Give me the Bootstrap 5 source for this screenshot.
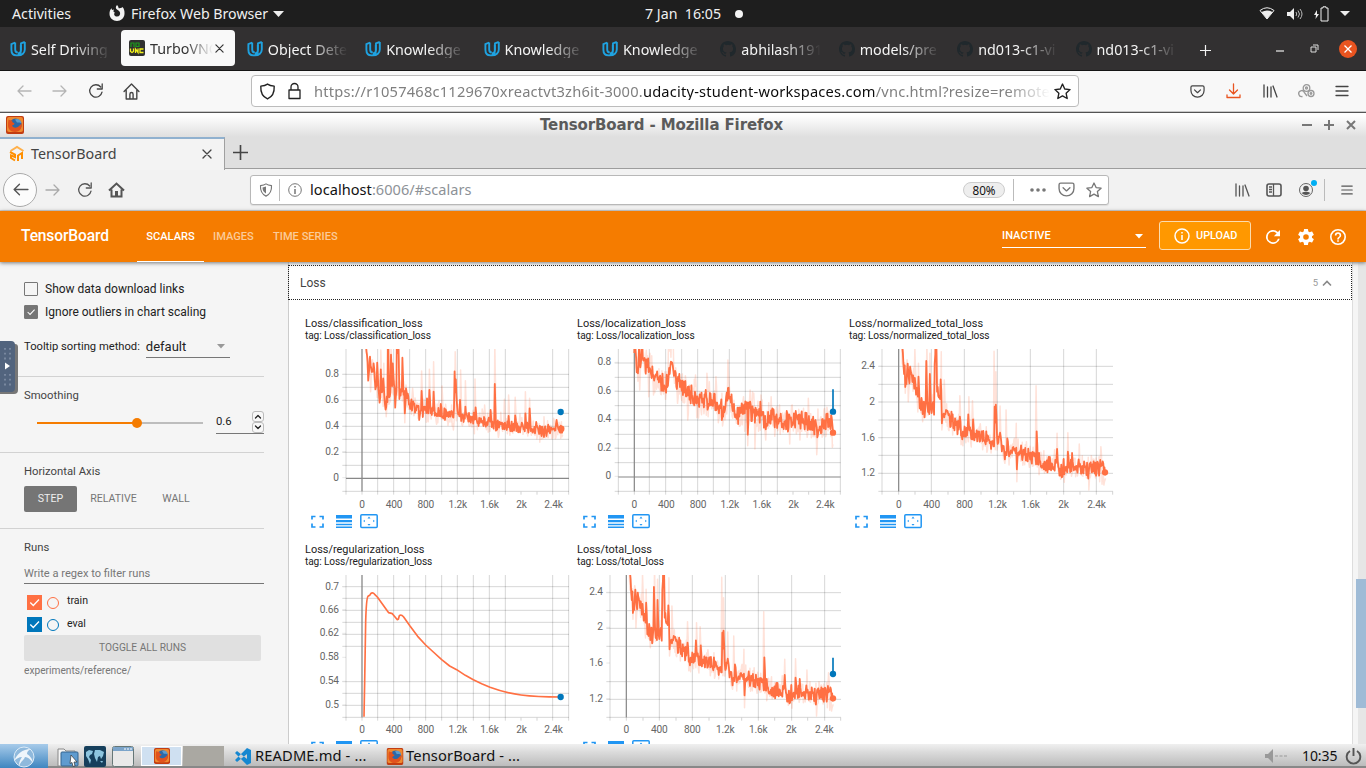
<!DOCTYPE html>
<html lang="en">
<head>
<meta charset="utf-8">
<title>TensorBoard</title>
<link href="https://cdn.jsdelivr.net/npm/bootstrap@5.3.0/dist/css/bootstrap.min.css" rel="stylesheet">
<style>
body{width:1366px;height:768px;overflow:hidden;font-family:"Noto Sans","Open Sans",sans-serif;font-size:14.3px;line-height:1.2;color:#222;background:#fff}
svg{display:block;overflow:visible}
.ln{fill:none;stroke:currentColor;stroke-width:1.3;stroke-linecap:round;stroke-linejoin:round}
.slots{display:grid;align-items:center;white-space:nowrap}
/* desktop top bar */
.gnome{height:27px;background:#1e1e1e;color:#f0f0f0;font-size:14.2px;grid-template-columns:12px 97px 22px 142px 372px 90px 524px 28px 27px 26px 1fr}
.gnome>*{min-width:0}
/* outer browser */
.otabs{height:44px;background:#323031;border-bottom:1px solid #151515;color:#f4f4f4;font-size:14.3px}
.otab{width:118.4px;height:44px;padding-left:10px;gap:5px;flex:none}
.otab .ttl{padding-top:2px;white-space:nowrap;-webkit-mask-image:linear-gradient(90deg,#000 42px,transparent 80px)}
.otab.on{width:114px;height:36px;margin:0 0 1px 2.6px;padding-left:8px;background:#f9f9f9;color:#333;border-radius:4px;margin-right:1.8px}
.otab.on .ttl{width:67px;-webkit-mask-image:linear-gradient(90deg,#000 36px,transparent 63px)}
.otab.on svg.x{margin-left:-7px}
.wctl{width:90px;grid-template-columns:34px 29px 1fr}
.onav{height:41px;background:#f8f8f8;color:#444;grid-template-columns:16px 36px 36px 35px 128px 939px 36px 36px 36px 36px 1fr;border-bottom:1px solid #c9c9c9}
.ourl{width:828px;height:32px;background:#fff;border:1px solid #bcbcbc;border-radius:4px;grid-template-columns:7px 29px 26px 736px 1fr;font-size:14.65px;color:#7f7f7f}
.ourl .adr{letter-spacing:.21px;padding-top:1px;-webkit-mask-image:linear-gradient(90deg,#000 94%,transparent 100%)}
.ourl b{font-weight:400;color:#0c0c0c}
/* remote window */
.vtitle{height:25px;border-top:1px solid #555;background:linear-gradient(#fff 10%,#dfdfdf);grid-template-columns:6px 534px 762px 22px 22px 1fr}
.vtitle .cap{font:bold 15px "DejaVu Sans",sans-serif;color:#5b5b5b;letter-spacing:-.12px}
.vtabs{height:32px;background:#dfdfdf;border-bottom:1px solid #9d9d9d;color:#444}
.vtab{width:225px;height:33px;margin-bottom:-1px;background:#f3f3f3;border-top:2.5px solid #90b1cf;border-right:1px solid #a0a0a0;grid-template-columns:9px 22px 171px 1fr}
.vnav{height:42px;background:#f2f2f2;color:#555;grid-template-columns:3px 42px 32px 31px 142px 984px 32px 32px 42px 1fr;border-bottom:1px solid #cfcfcf}
.vnav .ln{stroke-width:1.6}
.back{width:34px;height:34px;border:1px solid #aaa;border-radius:50%;background:#fcfcfc}
.vurl{width:859px;height:30px;background:#fff;border:1px solid #b8b8b8;border-radius:3px;color:#8d9297;grid-template-columns:8px 20px 31px 653px 67px 28px 28px 1fr;box-shadow:0 1px 1px #ddd}
.vurl b{font-weight:400;color:#111}
.vadr{font-size:14.55px;letter-spacing:.05px;padding-top:1px}
.vsep{border-left:1px solid #bbb;height:22px}
.pct{width:42px;height:16px;border:1px solid #ccc;border-radius:8px;background:#eee;font-size:11.7px;line-height:14px;text-align:center;color:#111}
/* tensorboard */
.tb{font-family:Roboto,sans-serif}
.tbhead{height:51px;background:#f57c00;color:#fff;grid-template-columns:21px 116px 67px 9px 60px 68px 661px 157px 107px 32px 32px 1fr;position:relative;z-index:2;box-shadow:0 1px 4px #777;font-size:11.1px;font-weight:500}
.tbhead .brandname{font-size:15.6px;font-weight:500;letter-spacing:-.15px}
.tbhead .tabon{height:51px;line-height:51px;border-bottom:1.5px solid #fff;text-align:center}
.dim{color:#fbcb99}
.inact{width:144px;height:23px;border-bottom:1px solid #fff;font-weight:500}
.upl{width:92px;height:29px;margin-top:-2px;border:1px solid #fbdcae;border-radius:3px;background:#ff9800;gap:6px;padding-left:14px;font-size:10.9px}
.tbmain{height:482px;overflow:hidden}
.side{width:288px;background:#f5f5f5;font-size:11.3px;color:#444}
.sec{width:264px;padding-left:24px;border-bottom:1px solid #d2d2d2}
.sec:last-child{border:0}
.s1{height:115px;padding-top:16px;color:#222}.s2,.s3{height:76px}
.s2,.s3,.s4{padding-top:12px}
.ck{height:23px;gap:7px;font-size:12px}
.box{width:14px;height:14px;border:1px solid #777;border-radius:1px;flex:none;margin-top:-2px}
.dd{width:84px;height:22px;border-bottom:1px solid #777;font-size:13px;margin-left:6px}
.ttrow{padding-top:12px;font-size:11.2px}
.smrow{padding-top:9px}
.track{width:166px;height:2px;margin-left:13px;background:linear-gradient(90deg,#f57c00 60%,#bdbdbd 60%)}
.knob{width:10px;height:10px;border-radius:50%;background:#f57c00;margin-left:95px}
.num{width:48px;height:22px;border-bottom:1px solid #777;margin-left:13px;color:#222}
.spin{width:12px;height:11px;border:1px solid #bbb;border-radius:3px;background:#f8f8f8}
.hbs{padding-top:7px}
.hb{height:26px;line-height:26px;font-size:10.6px;color:#757575;text-align:center}
.hb.on{width:53px;background:#757575;color:#eee;border-radius:2px}
.flt{height:25px;border-bottom:1px solid #757575;color:#777;font-size:11.1px}
.runs{padding-top:7px}
.rn{height:22.3px;color:#222;font-size:10.6px}
.rn .sq{width:15px;height:15px;margin:1px 5px 0 3px}
.rn .ci{width:12px;height:12px;border:1.3px solid;border-radius:50%;margin:2px 8px 0 0}
.tog{width:237px;height:26px;line-height:25px;background:#e0e0e0;border-radius:2px;text-align:center;color:#757575;font-size:10.2px}
.xp{color:#777;font-size:10.2px}
.pane{width:1065px;background:#fff;border-right:1px solid #ddd;border-left:1px solid #ccc;padding-top:3px}
.losshd{height:35px;margin-left:-1px;border:1px dotted #222;font-size:12px;color:#444;padding:1px 19px 0 11px}
.cnt{font-size:9.5px;color:#999}
.charts{padding:18px 0 0 16px}
.ch{width:272px;height:226px;font-size:10.15px;letter-spacing:-.1px;line-height:12px;color:#222}
.ch .t1{font-size:10.95px;letter-spacing:0}
.ch .tools{padding:0 0 0 6px;gap:12px;color:#2196f3}
.plot{margin-top:3px}
.plot text{font:30.5px Roboto,sans-serif;letter-spacing:-.6px;fill:#666}
.sbar{width:13px;background:linear-gradient(90deg,#f5f5f5 5px,#e6e6e6 5px);padding:317px 0 0 3px}
.thumb{height:129px;background:#9fbbd6}
/* task bar */
.task{height:24px;background:linear-gradient(#f0f0f0,#dadada 35%,#bcbcbc 92%,#888 93%);color:#111;grid-template-columns:48px 9px 27px 28px 29px 42px 42px 9px 21px 131px 20px 859px 37px 43px 1fr;font-size:14.7px}
.task .lbl{letter-spacing:.12px}
.clk{font-size:14px;letter-spacing:-.1px}
.lx{height:24px;background:linear-gradient(#a7cbea,#3f86c0);width:48px}
.pg{width:41px;height:20px}
</style>
</head>
<body>
<svg width="0" height="0" class="position-absolute">
<defs>
<symbol id="uda" viewBox="0 0 16 16"><path d="M5.2 1.5 1.4 3.2v5.6c0 3.6 2.2 5.6 5 5.6 2.5 0 4.4-1.5 4.4-4.5V3.8M5.2 1.5v7c0 2 1.2 3 2.6 3M14.8.9 11 2.4v6.4c0 2-1.2 3.6-3 3.6M14.8.9v7.6c0 3.4-2.8 5.9-6.8 5.9" fill="none" stroke="#1fa2e0" stroke-width="1.9"/></symbol>
<symbol id="gh" viewBox="0 0 16 16"><path fill="#20282c" d="M8 0C3.58 0 0 3.58 0 8c0 3.54 2.29 6.53 5.47 7.59.4.07.55-.17.55-.38 0-.19-.01-.82-.01-1.49-2.01.37-2.53-.49-2.69-.94-.09-.23-.48-.94-.82-1.13-.28-.15-.68-.52-.01-.53.63-.01 1.08.58 1.23.82.72 1.21 1.87.87 2.33.66.07-.52.28-.87.51-1.07-1.78-.2-3.64-.89-3.64-3.95 0-.87.31-1.59.82-2.15-.08-.2-.36-1.02.08-2.12 0 0 .67-.21 2.2.82a7.6 7.6 0 0 1 4 0c1.53-1.04 2.2-.82 2.2-.82.44 1.1.16 1.92.08 2.12.51.56.82 1.27.82 2.15 0 3.07-1.87 3.75-3.65 3.95.29.25.54.73.54 1.48 0 1.07-.01 1.93-.01 2.2 0 .21.15.46.55.38A8 8 0 0 0 16 8c0-4.42-3.58-8-8-8z"/></symbol>
<symbol id="left" viewBox="0 0 16 16"><path class="ln" d="M15 8H2M7 3 2 8l5 5"/></symbol>
<symbol id="right" viewBox="0 0 16 16"><path class="ln" d="M1 8h13M9 3l5 5-5 5"/></symbol>
<symbol id="rel" viewBox="0 0 16 16"><path class="ln" d="M14 9.2A6.2 6.2 0 1 1 12.7 4M14.2 1v5H9.3"/></symbol>
<symbol id="home" viewBox="0 0 16 16"><path class="ln" d="M1 8l7-7 7 7M3 7v8h10V7M6.5 15v-4.5a1.5 1.5 0 0 1 3 0V15"/></symbol>
<symbol id="shield" viewBox="0 0 16 16"><path class="ln" d="M8 1c2 1.3 4 1.7 6.3 2 .3 5-1 9.5-6.3 12C2.7 12.5 1.4 8 1.7 3 4 2.7 6 2.3 8 1z"/></symbol>
<symbol id="pocket" viewBox="0 0 16 16"><path class="ln" d="M2.5 2h11a1.500 1.500 0 0 1 1.500 1.500V7c0 4-3 7-7 7S1 11 1 7V3.500A1.500 1.500 0 0 1 2.500 2zM4.800 6.300 8 9.300l3.200-3"/></symbol>
<symbol id="star" viewBox="0 0 16 16"><path class="ln" d="m8 1 2.100 4.600 5 .6-3.700 3.400 1 5L8 12.100l-4.400 2.500 1-5L.9 6.200l5-.6z"/></symbol>
<symbol id="lib" viewBox="0 0 16 16"><path class="ln" d="M2 2v12M5.500 4v10M9 4v10M11 3l4 11"/></symbol>
<symbol id="burger" viewBox="0 0 16 16"><path class="ln" d="M2 3.500h12M2 8h12M2 12.500h12"/></symbol>
<symbol id="cross" viewBox="0 0 10 10"><path class="ln" d="M1 1l8 8M9 1 1 9"/></symbol>
<symbol id="plus" viewBox="0 0 12 12"><path class="ln" d="M6 0v12M0 6h12"/></symbol>
<symbol id="fox" viewBox="0 0 18 18"><rect width="18" height="18" rx="2" fill="#c23d12"/><rect x="1" y="1" width="16" height="15" rx="2" fill="#ef8a30"/><circle cx="9.500" cy="8.800" r="6.200" fill="#2c69a8"/><path d="M9 3.500c3-1.500 6 0 6.500 4-1.500-1.500-3-1-4.500-1z" fill="#5e9ccb"/><path d="M2.500 3.500C4 4.500 5 4.200 6.500 4.600 5.500 6 7 6.700 8.600 7.400 8 9 6.500 8.800 6 9.800c1.500 2.500 5 2.200 6.500.7 1-1 2-1.500 3.200-3.500.8 5-2.200 9-6.700 9C4.500 16 2 13 2 9.500c0-2 0-4 .5-6z" fill="#e2521d"/></symbol>
<symbol id="tick" viewBox="0 0 15 15"><path d="m3.300 7.500 3 3L12 4.500" fill="none" stroke="#fff" stroke-width="1.300"/></symbol>
</defs></svg>

<div class="gnome slots">
<i></i><span>Activities</span>
<svg width="16" height="17" viewBox="0 0 16 17" fill="#f2f2f2"><path d="M8 0c1 1 1.500 1.700 1.600 3.200C12 3.500 13 2.500 13.500 2c1.500 1.500 2.200 4 2 7-.3 4-3.500 7-7.500 7S.6 13 .5 9C.5 6.500 1 5 2.500 3.300L3 5l2-.6c-1 2-.6 2.600 1 3C4.500 8.500 5 11.500 8 11.500c2.500 0 3.500-2 3-4C10.500 5.500 8 5 7 3.500 6.500 2 7.300.7 8 0z"/></svg>
<span>Firefox Web Browser</span>
<svg width="11" height="6"><path d="M0 0h11L5.500 6z" fill="#eee"/></svg>
<span>7 Jan&nbsp; 16:05</span>
<svg width="8" height="8"><circle cx="4" cy="4" r="4" fill="#f4f4f4"/></svg>
<svg width="16" height="13" viewBox="0 0 16 13"><path d="M1 3.500Q8-2 15 3.500L8 12z" fill="none" stroke="#eee"/><path d="M2.500 5Q8 2 13.500 5L8 12z" fill="#eee"/></svg>
<svg width="16" height="14" viewBox="0 0 16 14"><path d="M0 5h3l4-4v12L3 9H0z" fill="#eee"/><path d="M9 5q1.500 2 0 4M11 3.500q3 3.500 0 7M13 2q4 5 0 10" fill="none" stroke="#bbb"/></svg>
<svg width="16" height="16" viewBox="0 0 16 16"><path d="M3 4 0 9h2l-.5 4L5 8H3z" fill="#eee"/><path d="M7 2h2V.8h3V2h2v13H7z" fill="none" stroke="#eee"/></svg>
<svg width="10" height="5"><path d="M0 0h10L5 5z" fill="#eee"/></svg>
</div>

<div class="otabs d-flex align-items-center">
<div class="otab d-flex align-items-center"><svg width="16" height="16"><use href="#uda"/></svg><span class="ttl">Self Driving</span></div>
<div class="otab on d-flex align-items-center"><svg width="16" height="16" viewBox="0 0 16 16"><rect width="16" height="16" rx="2" fill="#303030"/><path d="M2 7V3h3v4M7 3h3v3.500H7z" fill="none" stroke="#1c9c1c" stroke-width="1.200"/><path d="M1.500 8.500v3l1.500 1 1.500-1v-3M6.500 13V9l2.500 3.500V8.500M14.500 9H11v3.500h3.500" fill="none" stroke="#f2f21a" stroke-width="1.300"/></svg><span class="ttl">TurboVNC</span><svg class="x" width="9" height="9"><use href="#cross"/></svg></div>
<div class="otab d-flex align-items-center"><svg width="16" height="16"><use href="#uda"/></svg><span class="ttl">Object Dete</span></div>
<div class="otab d-flex align-items-center"><svg width="16" height="16"><use href="#uda"/></svg><span class="ttl">Knowledge</span></div>
<div class="otab d-flex align-items-center"><svg width="16" height="16"><use href="#uda"/></svg><span class="ttl">Knowledge</span></div>
<div class="otab d-flex align-items-center"><svg width="16" height="16"><use href="#uda"/></svg><span class="ttl">Knowledge</span></div>
<div class="otab d-flex align-items-center"><svg width="16" height="16"><use href="#gh"/></svg><span class="ttl">abhilash191</span></div>
<div class="otab d-flex align-items-center"><svg width="16" height="16"><use href="#gh"/></svg><span class="ttl">models/pre</span></div>
<div class="otab d-flex align-items-center"><svg width="16" height="16"><use href="#gh"/></svg><span class="ttl">nd013-c1-vi</span></div>
<div class="otab d-flex align-items-center"><svg width="16" height="16"><use href="#gh"/></svg><span class="ttl">nd013-c1-vi</span></div>
<svg class="ms-3 mt-1" width="11" height="11"><use href="#plus"/></svg>
<div class="slots wctl ms-auto">
<svg width="8" height="9"><path d="M0 7h8" stroke="#eee" stroke-width="1.200"/></svg>
<svg width="9" height="9"><path d="M1 3h5v5H1zM3 1h5v5" fill="none" stroke="#ddd"/></svg>
<svg width="18" height="18"><circle cx="9" cy="9" r="9" fill="#e95420"/><path d="m5.500 5.500 7 7m0-7-7 7" stroke="#fff" stroke-width="1.300"/></svg></div>
</div>

<div class="onav slots">
<i></i><svg width="16" height="16" color="#b5b5b5"><use href="#left"/></svg><svg width="16" height="16" color="#b5b5b5"><use href="#right"/></svg><svg width="16" height="16"><use href="#rel"/></svg><svg width="17" height="17"><use href="#home"/></svg>
<div class="ourl slots"><i></i><svg width="17" height="17" color="#222"><use href="#shield"/></svg>
<svg width="13" height="17" viewBox="0 0 13 17" color="#222"><path class="ln" d="M1 7h11v8.500H1zM3 7V4a3.500 3.500 0 0 1 7 0v3"/></svg>
<span class="adr">https://r1057468c1129670xreactvt3zh6it-3000.<b>udacity-student-workspaces.com</b>/vnc.html?resize=remote</span>
<svg class="ms-1" width="17" height="17" color="#222"><use href="#star"/></svg></div>
<svg width="15" height="15"><use href="#pocket"/></svg>
<svg width="15" height="16" viewBox="0 0 15 16" color="#e95420"><path class="ln" d="M7.500 1v10M3.500 7l4 4 4-4M1 12v2.500h13V12"/></svg>
<svg width="16" height="16"><use href="#lib"/></svg>
<svg width="17" height="14" viewBox="0 0 17 14" fill="none" stroke="#999" stroke-width="1.300"><circle cx="8.500" cy="4" r="3.300"/><circle cx="8.500" cy="4" r="1"/><circle cx="13" cy="9.500" r="3"/><circle cx="13" cy="9.500" r=".8"/><path d="M4.500 12.500a3 3 0 1 1 2-4M6 8l3 4"/></svg>
<svg width="16" height="16"><use href="#burger"/></svg>
</div>

<div class="vtitle slots"><i></i><svg width="18" height="18"><use href="#fox"/></svg><span class="cap">TensorBoard - Mozilla Firefox</span>
<svg width="10" height="10" color="#777"><path d="M0 5h10" stroke="currentColor" stroke-width="2"/></svg><svg width="10" height="10" color="#777"><path d="M0 5h10M5 0v10" stroke="currentColor" stroke-width="2"/></svg><svg width="10" height="10" color="#777"><path d="m1 1 8 8m0-8L1 9" stroke="currentColor" stroke-width="2"/></svg></div>

<div class="vtabs d-flex align-items-center">
<div class="vtab slots"><i></i><svg width="16" height="16" viewBox="0 0 16 16" fill="none" stroke="#ff8f00" stroke-width="2"><path d="M1.500 5 8 1l6.500 4" stroke="#ffb04a"/><path d="M1 6l5 2.500V11L2 9.500V12l4 2.500M9 9v6M9 9.500l4-2.500v6"/></svg><span>TensorBoard</span><svg width="10" height="10"><use href="#cross"/></svg></div>
<svg class="ms-2" width="15" height="15"><use href="#plus"/></svg></div>

<div class="vnav slots"><i></i>
<div class="back d-flex align-items-center justify-content-center"><svg width="17" height="17"><use href="#left"/></svg></div>
<svg width="16" height="16" color="#aaa"><use href="#right"/></svg><svg width="16" height="16"><use href="#rel"/></svg>
<svg width="17" height="16" viewBox="0 0 17 16"><path d="m1 8.500 7.500-7 7.500 7M3.500 7.500v7h10v-7" fill="none" stroke="#555" stroke-width="2"/><path d="M7 14V9h3v5z" fill="#555"/></svg>
<div class="vurl slots"><i></i><svg width="14" height="14" color="#777" viewBox="0 0 16 16"><use href="#shield"/><path d="M8 4v8c-3-2-4-4-4-7z" fill="#777"/></svg>
<div class="vsep ps-2 d-flex align-items-center"><svg width="14" height="14" viewBox="0 0 14 14" fill="none" stroke="#777"><circle cx="7" cy="7" r="6.300"/><path d="M7 3v1.500M7 6v5" stroke-width="1.500"/></svg></div>
<span class="vadr"><b>localhost</b>:6006/#scalars</span><div class="d-flex align-items-center"><span class="pct">80%</span><span class="vsep ms-2 ps-1"></span></div>
<svg width="16" height="4" fill="#777"><circle cx="2" cy="2" r="1.800"/><circle cx="8" cy="2" r="1.800"/><circle cx="14" cy="2" r="1.800"/></svg>
<svg width="17" height="17" color="#777"><use href="#pocket"/></svg><svg width="16" height="16" color="#777"><use href="#star"/></svg></div>
<svg width="16" height="16"><use href="#lib"/></svg>
<svg width="16" height="16" viewBox="0 0 16 16" color="#555"><rect class="ln" x="1" y="2" width="14" height="12" rx="2"/><path d="M7.500 2v12M3 5h3M3 7.500h3M3 10h3" stroke="#555" stroke-width="1.300"/></svg>
<div class="d-flex align-items-center"><svg width="18" height="16" viewBox="0 0 18 16"><circle cx="8" cy="8" r="6.500" fill="none" stroke="#666"/><circle cx="8" cy="6.500" r="2.800" fill="#555"/><path d="M3.500 11q4.500-2.500 9 0-4.500 4-9 0z" fill="#555"/><circle cx="16" cy="1" r="3" fill="#00aef3"/></svg><span class="vsep ms-2"></span></div>
<svg width="14" height="16"><use href="#burger"/></svg>
</div>

<div class="tb">
<div class="tbhead slots"><i></i><span class="brandname">TensorBoard</span><span class="tabon">SCALARS</span><i></i><span class="dim">IMAGES</span><span class="dim">TIME SERIES</span><i></i>
<div class="inact d-flex justify-content-between align-items-center">INACTIVE<svg width="8" height="5" style="margin-right:3px"><path d="M0 0h8L4 4.500z" fill="#fff"/></svg></div>
<div class="upl d-flex align-items-center"><svg width="16" height="16" viewBox="0 0 16 16"><circle cx="8" cy="8" r="7" fill="none" stroke="#fff" stroke-width="1.500"/><path d="M8 4v1.500M8 7v5" stroke="#fff" stroke-width="1.500"/></svg>UPLOAD</div>
<svg width="14" height="14" viewBox="4 4 16 16" fill="#fff"><path d="M17.650 6.350A8 8 0 1 0 19.730 14h-2.080A6 6 0 1 1 12 6c1.660 0 3.140.69 4.220 1.780L13 11h7V4z"/></svg>
<svg width="16" height="16" viewBox="2 2 20 20" fill="#fff"><path d="M19.430 12.980c.04-.32.07-.64.07-.98s-.03-.66-.07-.98l2.110-1.650c.19-.15.24-.42.12-.64l-2-3.460c-.12-.22-.39-.3-.61-.22l-2.490 1c-.52-.4-1.080-.73-1.690-.98l-.38-2.650A.49.49 0 0 0 14 2h-4c-.25 0-.46.18-.49.42l-.38 2.650c-.61.25-1.170.59-1.690.98l-2.490-1c-.23-.09-.49 0-.61.22l-2 3.460c-.13.22-.07.49.12.64l2.110 1.650c-.04.32-.07.65-.07.98s.03.66.07.98l-2.110 1.650c-.19.15-.24.42-.12.64l2 3.460c.12.22.39.3.61.22l2.490-1c.52.4 1.080.73 1.690.98l.38 2.650c.03.24.24.42.49.42h4c.25 0 .46-.18.49-.42l.38-2.650c.61-.25 1.170-.59 1.690-.98l2.490 1c.23.09.49 0 .61-.22l2-3.460c.12-.22.07-.49-.12-.64zM12 15.500a3.500 3.500 0 1 1 0-7 3.500 3.500 0 0 1 0 7z"/></svg>
<svg width="16" height="16" viewBox="2 2 20 20" fill="#fff"><path d="M11 18h2v-2h-2zM12 2a10 10 0 1 0 0 20 10 10 0 0 0 0-20zm0 18a8 8 0 1 1 0-16 8 8 0 0 1 0 16zm0-14a4 4 0 0 0-4 4h2a2 2 0 1 1 4 0c0 2-3 1.750-3 5h2c0-2.250 3-2.500 3-5a4 4 0 0 0-4-4z"/></svg>
</div>
<div class="tbmain d-flex">
<div class="side flex-shrink-0 position-relative">
<svg class="position-absolute start-0" style="top:79px" width="19" height="55" viewBox="0 0 19 55"><path d="M0 3h15q3 0 3 3v43q0 4-4 4H0z" fill="#777"/><path d="M0 0h11q4 0 4 4v43q0 4-4 4H0z" fill="#52647e"/><path d="M5 7v12M10 7v12M5 33v12M10 33v12" stroke="#7d8ca3" stroke-width="1.800" stroke-dasharray="1.800 3"/><path d="M5 21.500 10 25l-5 3.500z" fill="#fff"/></svg>
<div class="sec s1">
<div class="ck d-flex align-items-center"><span class="box"></span>Show data download links</div>
<div class="ck d-flex align-items-center"><span class="box" style="background:#757575"><svg width="12" height="12"><use href="#tick"/></svg></span>Ignore outliers in chart scaling</div>
<div class="ttrow d-flex align-items-center"><span>Tooltip sorting method:</span><div class="dd d-flex align-items-center justify-content-between">default<svg class="me-1" width="9" height="5"><path d="M0 0h8L4 4.500z" fill="#999"/></svg></div></div>
</div>
<div class="sec s2"><div>Smoothing</div>
<div class="smrow d-flex align-items-center"><div class="track d-flex align-items-center"><div class="knob"></div></div>
<div class="num d-flex align-items-center justify-content-between">0.6<div><div class="spin"><svg width="10" height="9" viewBox="0 0 10 9"><path class="ln" d="m2.500 6 2.500-2.500L7.500 6"/></svg></div><div class="spin"><svg width="10" height="9" viewBox="0 0 10 9"><path class="ln" d="m2.500 3 2.500 2.500L7.500 3"/></svg></div></div></div></div></div>
<div class="sec s3"><div>Horizontal Axis</div><div class="hbs d-flex"><div class="hb on">STEP</div><div class="hb" style="width:73px">RELATIVE</div><div class="hb" style="width:52px">WALL</div></div></div>
<div class="sec s4"><div>Runs</div><div class="flt mt-1 pt-2">Write a regex to filter runs</div>
<div class="runs"><div class="rn d-flex align-items-center"><svg class="sq" style="background:#ff7043"><use href="#tick"/></svg><span class="ci" style="color:#ff7043"></span>train</div>
<div class="rn d-flex align-items-center"><svg class="sq" style="background:#0077bb"><use href="#tick"/></svg><span class="ci" style="color:#0077bb"></span>eval</div></div>
<div class="tog">TOGGLE ALL RUNS</div><div class="xp pt-1">experiments/reference/</div></div>
</div>
<div class="pane flex-shrink-0"><div class="losshd d-flex align-items-center"><span>Loss</span><span class="cnt ms-auto me-1">5</span><svg width="10" height="6"><path d="m1 5.500 4-4 4 4" fill="none" stroke="#888" stroke-width="1.600"/></svg></div>
<div id="charts" class="charts d-flex flex-wrap"></div></div>
<div class="sbar"><div class="thumb"></div></div>
</div></div>

<div class="task slots">
<div class="lx d-flex justify-content-center align-items-center"><svg width="22" height="22" viewBox="0 0 22 22"><circle cx="11" cy="12" r="10" fill="#8fb9dc" stroke="#dcebf7"/><path d="M1 16C4 9 9 4 18 4c-3 1-4 3-4 5 3 2 5 4 6 9-3-4-5-6-8-6-1 3-4 4-6 9 0-4 1-6 3-9-3 0-6 2-8 4z" fill="#eef5fb"/></svg></div><i></i>
<svg width="22" height="21" viewBox="0 0 22 21"><path d="M1 3h6l2 2h9v15H1z" fill="#f5f5f5" stroke="#888"/><rect x="4" y="6" width="17" height="14" rx="1" fill="#5f9bcf" stroke="#35658f"/><path d="m14 9 6 7h-3l1 4-2 .5-1-4-2 1z" fill="#fff" stroke="#333" stroke-width=".7"/></svg>
<svg width="22" height="21" viewBox="0 0 22 21"><rect width="22" height="21" rx="2" fill="#163f5c"/><path d="M2 6l3-2 4 1-1 3-2 1-1 2 2 3-1 4-2-5-2-3zM11 4l5 0 4 2-1 4-2 3-1-3-2 1-1 5-2-4-1-4zM16 15l3 0-1 2z" fill="#8dc5df"/></svg>
<svg width="22" height="21" viewBox="0 0 22 21"><rect x=".5" y=".5" width="21" height="20" rx="2" fill="#e9e9e9" stroke="#677"/><path d="M1 1h20v4H1z" fill="#7ba4ca"/><path d="M12 3h2m1 0h2m1 0h2" stroke="#fff"/></svg>
<div class="pg d-flex justify-content-center align-items-center border border-white" style="background:#cfe0f1"><svg width="16" height="16"><use href="#fox"/></svg></div>
<div class="pg" style="background:#aaa8a2"></div><i></i>
<svg width="18" height="17" viewBox="0 0 18 17"><path d="M13 0v17l4-2V2zM13 0 1 12l2 2L13 6zM13 17 1 5l2-2 10 8z" fill="#1687d0"/></svg>
<span class="lbl">README.md - ...</span><svg width="18" height="17" viewBox="0 0 18 18"><use href="#fox"/></svg><span class="lbl">TensorBoard - ...</span>
<svg width="22" height="14" viewBox="0 0 22 14"><path d="M0 5h3l5-5v14L3 9H0z" fill="#999"/><path d="M10 7h12" stroke="#999" stroke-dasharray="3 1.500"/></svg>
<span class="clk">10:35</span>
<svg width="17" height="17" viewBox="0 0 17 17"><path d="M5 3a6.800 6.800 0 1 0 7 0M8.500 0v8" fill="none" stroke="#555" stroke-width="1.900"/></svg>
</div>

<script>
// Shape shared by both total loss curves; x is measured from step 0.
const totalMid=[[0,20],[8,100],[14,160],[20,205],[28,190],[38,205],[46,215],[56,255],[64,280],[72,295],[84,290],[94,295],[102,290],[110,245],[118,240],[125,255],[132,310],[142,305],[152,335],[170,345],[195,370],[215,365],[240,375],[270,388],[283,395],[298,385],[318,425],[340,410],[360,420],[380,433],[412,450],[450,460],[487,475],[520,465],[560,475],[596,470],[621,487]];
const totalUp=[[26,148],[34,170],[60,200],[82,153],[93,192],[108,10],[112,20],[126,208],[158,305],[184,320],[209,313],[224,328],[288,290],[291,284],[304,368],[326,385],[354,395],[414,364],[476,417],[507,425],[521,429],[605,450]];
const totalLow=[[24,222],[72,312],[78,322],[106,314],[130,340],[318,448],[354,478],[489,502],[568,506]];
const totalFaint=[[48,115],[60,160],[84,90],[94,130],[114,30],[127,125],[136,210],[184,257],[210,260],[222,272],[287,124],[292,185],[304,288],[322,300],[352,340],[412,227],[476,370],[508,368],[542,402],[606,410]];
const totalDeep=[[20,250],[28,275],[72,335],[130,360],[318,460],[354,515],[570,540],[616,525]];
const shift=(a,dx,dy)=>a.map(p=>[p[0]+dx,p[1]+dy]);
const grid1=[168,216,263,311,359,407,455,502,550,598,646,788,836];
const lab=(x,d)=>['0','400','800','1.2k','1.6k','2k','2.4k'].map((t,i)=>[x+i*d,t]);
const charts=[
{n:'classification_loss',o:[45,105],x:grid1,tk:[693,741],y:[193,232,271,310,349,388,427,466,544],z:505,x0:216,l:168,r:837,
 yl:[[193,'0.8'],[271,'0.6'],[349,'0.4'],[425,'0.2'],[503,'0']],xl:lab(216,95.7),amp:23,famp:42,
 mid:[[222,40],[230,140],[236,180],[250,190],[262,225],[270,255],[280,250],[287,275],[298,265],[306,230],[315,240],[325,245],[332,250],[345,255],[360,285],[400,303],[430,302],[460,313],[485,315],[500,300],[520,322],[540,323],[560,333],[590,334],[640,348],[700,352],[760,362],[800,360],[818,356]],
 up:[[240,140],[250,160],[261,158],[272,178],[280,205],[294,30],[303,134],[309,160],[321,20],[325,60],[338,143],[348,235],[394,243],[411,265],[419,240],[430,245],[452,282],[493,184],[497,208],[510,270],[527,290],[556,292],[602,300],[614,222],[656,318],[676,316],[706,310],[718,295],[738,336],[800,330]],
 lo:[[234,212],[256,238],[269,278],[287,299],[316,293],[344,310],[388,330],[770,378]],
 fu:[[272,120],[281,160],[303,105],[348,225],[368,235],[394,183],[419,178],[430,155],[456,228],[495,125],[511,180],[526,212],[555,207],[583,285],[614,100],[644,268],[656,255],[676,262],[706,245],[718,265],[750,310],[762,320],[790,325]],
 fl:[[241,245],[262,262],[288,320],[344,338],[490,360],[625,382],[749,397]],end:[[814,356,'#ff7043']],dot:[812,306]},
{n:'localization_loss',o:[21,105],x:[145,193,238,287,335,383,430,478,526,574,622,764,811],tk:[669,716],y:[159,202,244,287,330,373,415,458,544],z:501,x0:193,l:145,r:812,
 yl:[[157,'0.8'],[243,'0.6'],[328,'0.4'],[414,'0.2'],[499,'0']],xl:lab(193,95.5),amp:36,famp:66,
 mid:[[193,150],[202,170],[215,165],[238,165],[255,205],[272,215],[288,225],[297,185],[305,170],[318,210],[340,235],[370,262],[390,275],[430,270],[455,298],[465,280],[474,250],[490,285],[500,315],[530,295],[560,310],[580,325],[605,320],[640,335],[680,327],[720,340],[750,345],[785,335],[789,368]],
 up:[[194,60],[208,90],[216,100],[302,155],[307,158],[408,240],[473,234],[480,262],[540,275],[571,275],[650,303],[784,316]],
 lo:[[204,190],[287,244],[455,330],[534,374],[588,358],[742,382]],
 fu:[[240,130],[296,80],[300,60],[304,50],[309,60],[377,195],[410,190],[438,200],[473,150],[540,240],[552,250],[572,255],[715,265],[764,295]],
 fl:[[209,240],[236,260],[322,280],[354,330],[464,330],[533,407],[554,417],[588,390],[660,402],[741,434],[787,412]],end:[[789,368,'#ff7043'],[789,305,'#0077bb']],bar:[789,238,305]},
{n:'normalized_total_loss',o:[27,105],x:[126,176,274,373,472,571,671,769],tk:[225,324,423,521,620,720,818],y:[169,223,276,330,383,436,490,544],x0:176,l:126,r:819,
 yl:[[169,'2.4'],[276,'2'],[383,'1.6'],[490,'1.2']],xl:lab(176,98.9),amp:29,famp:50,
 mid:shift(totalMid,176,0),up:shift(totalUp,176,0),lo:shift(totalLow,176,0),fu:shift(totalFaint,176,0),fl:shift(totalDeep,176,0),end:[[795,487,'#ff7043']]},
{n:'regularization_loss',o:[45,108],x:grid1,tk:[693,741],y:[155,190,226,262,298,334,440,475,511,547],x0:216,l:168,r:837,
 yl:[[155,'0.7'],[224,'0.66'],[295,'0.62'],[367,'0.58'],[439,'0.54'],[510,'0.5']],xl:lab(216,95.7),
 path:'M222 545L224 440 227 260Q229 190 234 184L239 181Q246 168 254 178L262 186 296 233 307 236 322 254 325 253 328 242Q334 238 341 246L360 273 383 304 407 330 430 351 455 374 479 393 500 404 526 421 550 434 575 446 600 457Q646 474 693 480T812 486',end:[[812,486,'#0077bb']]},
{n:'total_loss',o:[21,108],x:[120,169,268,367,466,565,665,764],tk:[219,318,417,515,614,713,812],y:[173,227,280,334,440,493,547],x0:169,l:120,r:813,
 yl:[[172,'2.4'],[277,'2'],[384,'1.6'],[491,'1.2']],xl:lab(169,98.9),amp:29,famp:50,
 mid:shift(totalMid,169,3),up:shift(totalUp,169,3),lo:shift(totalLow,169,3),fu:shift(totalFaint,169,3),fl:shift(totalDeep,169,3),end:[[789,490,'#ff7043'],[789,417,'#0077bb']],bar:[789,368,417]}
];
function rng(s){return()=>{s=(s*16807)%2147483647;return s/2147483647*2-1}}
function at(k,x){for(let i=1;i<k.length;i++)if(x<=k[i][0]){const a=k[i-1],b=k[i];return a[1]+(b[1]-a[1])*(x-a[0])/(b[0]-a[0])}return k[k.length-1][1]}
function series(c,amp,spikes,seed){
 const r=rng(seed),pts=[],st=1.8;
 for(let x=c.mid[0][0];x<=c.mid[c.mid.length-1][0];x+=st)pts.push([x,at(c.mid,x)+r()*amp*(.55+.45*Math.abs(r()))]);
 for(const s of spikes){const i=Math.round((s[0]-c.mid[0][0])/st);if(pts[i]){pts[i][1]=s[1];if(pts[i+1])pts[i+1][1]=pts[i+1][1]*.5+s[1]*.5}}
 return pts.map(p=>p[0].toFixed(1)+','+p[1].toFixed(0)).join(' ');
}
const tools='<div class="tools d-flex align-items-center"><svg width="13" height="13" viewBox="0 0 13 13"><path d="M1 4.500V1.500H4.500M8.500 1.500H12V4.500M12 8.500V12H8.500M4.500 12H1V8.500" fill="none" stroke="currentColor" stroke-width="1.700"/></svg><svg width="16" height="13" viewBox="0 0 16 13"><path d="M0 0h16v3.500H0zM0 5h16v2.300H0zM0 8.700h16v1.600H0zM0 11.600h16v1.300H0z" fill="currentColor"/></svg><svg style="margin-left:-4px" width="18" height="14" viewBox="0 0 18 14"><rect x=".8" y=".8" width="16.400" height="12.700" rx="1" fill="none" stroke="currentColor" stroke-width="1.500"/><path d="M9 2.600 10.500 4.400h-3zM9 11.700l1.500-1.800h-3zM3.200 7l1.600-1.300v2.600zM14.800 7l-1.600-1.300v2.600z" fill="currentColor"/></svg></div>';
document.getElementById('charts').innerHTML=charts.map((c,i)=>{
 const top=c.o[1]+12,bot=i>2?547:544;
 let g='';
 c.y.forEach(y=>g+=`<path d="M${c.l-11} ${y}H${c.r}" stroke="#000" stroke-opacity=".19" stroke-width="2.600"/>`);
 c.yl.forEach(v=>g+=`<path d="M${c.l-11} ${v[0]}h11" stroke="#ddd" stroke-width="2"/>`);
 c.x.forEach(x=>g+=`<path d="M${x} ${top}V${bot+10}" stroke="#000" stroke-opacity=".19" stroke-width="2.600"/>`);
 c.tk.forEach(x=>g+=`<path d="M${x} ${bot}v10" stroke="#ccc" stroke-width="2.600"/>`);
 g+=`<path d="M${c.x0} ${top}V${bot}" stroke="#888" stroke-width="3.500"/>`;
 if(c.z)g+=`<path d="M${c.l} ${c.z}H${c.r}" stroke="#888" stroke-width="3.500"/>`;
 g+=`<clipPath id="cp${i}"><rect x="${c.l}" y="${top}" width="${c.r-c.l}" height="${bot-top}"/></clipPath><g clip-path="url(#cp${i})" fill="none" stroke="#ff7043" stroke-linejoin="round">`;
 if(c.path)g+=`<path d="${c.path}" stroke-width="5"/>`;
 else g+=`<polyline points="${series(c,c.famp,c.fu.concat(c.fl),77)}" stroke-width="4.500" stroke-opacity=".2"/><polyline points="${series(c,c.amp,c.up.concat(c.lo),i===4?1236:1234+i)}" stroke-width="5.400"/>`;
 g+='</g>';
 if(c.bar)g+=`<path d="M${c.bar[0]} ${c.bar[1]}V${c.bar[2]}" stroke="#0077bb" stroke-width="5"/>`;
 c.end.forEach(e=>g+=`<circle cx="${e[0]}" cy="${e[1]}" r="9.500" fill="${e[2]}"/>`);
 if(c.dot)g+=`<circle cx="${c.dot[0]}" cy="${c.dot[1]}" r="9.500" fill="#0077bb"/>`;
 c.yl.forEach(v=>g+=`<text x="${c.l-22}" y="${v[0]+9}" text-anchor="end">${v[1]}</text>`);
 c.xl.forEach(v=>g+=`<text x="${v[0]}" y="593" text-anchor="middle">${v[1]}</text>`);
 return `<div class="ch"><div class="t1">Loss/${c.n}</div><div>tag: Loss/${c.n}</div><svg class="plot" width="272" height="169" viewBox="${c.o[0]} ${c.o[1]} 816 507">${g}</svg>${tools}</div>`;
}).join('');
</script>
<script src="https://cdn.jsdelivr.net/npm/bootstrap@5.3.0/dist/js/bootstrap.bundle.min.js"></script>
</body>
</html>
